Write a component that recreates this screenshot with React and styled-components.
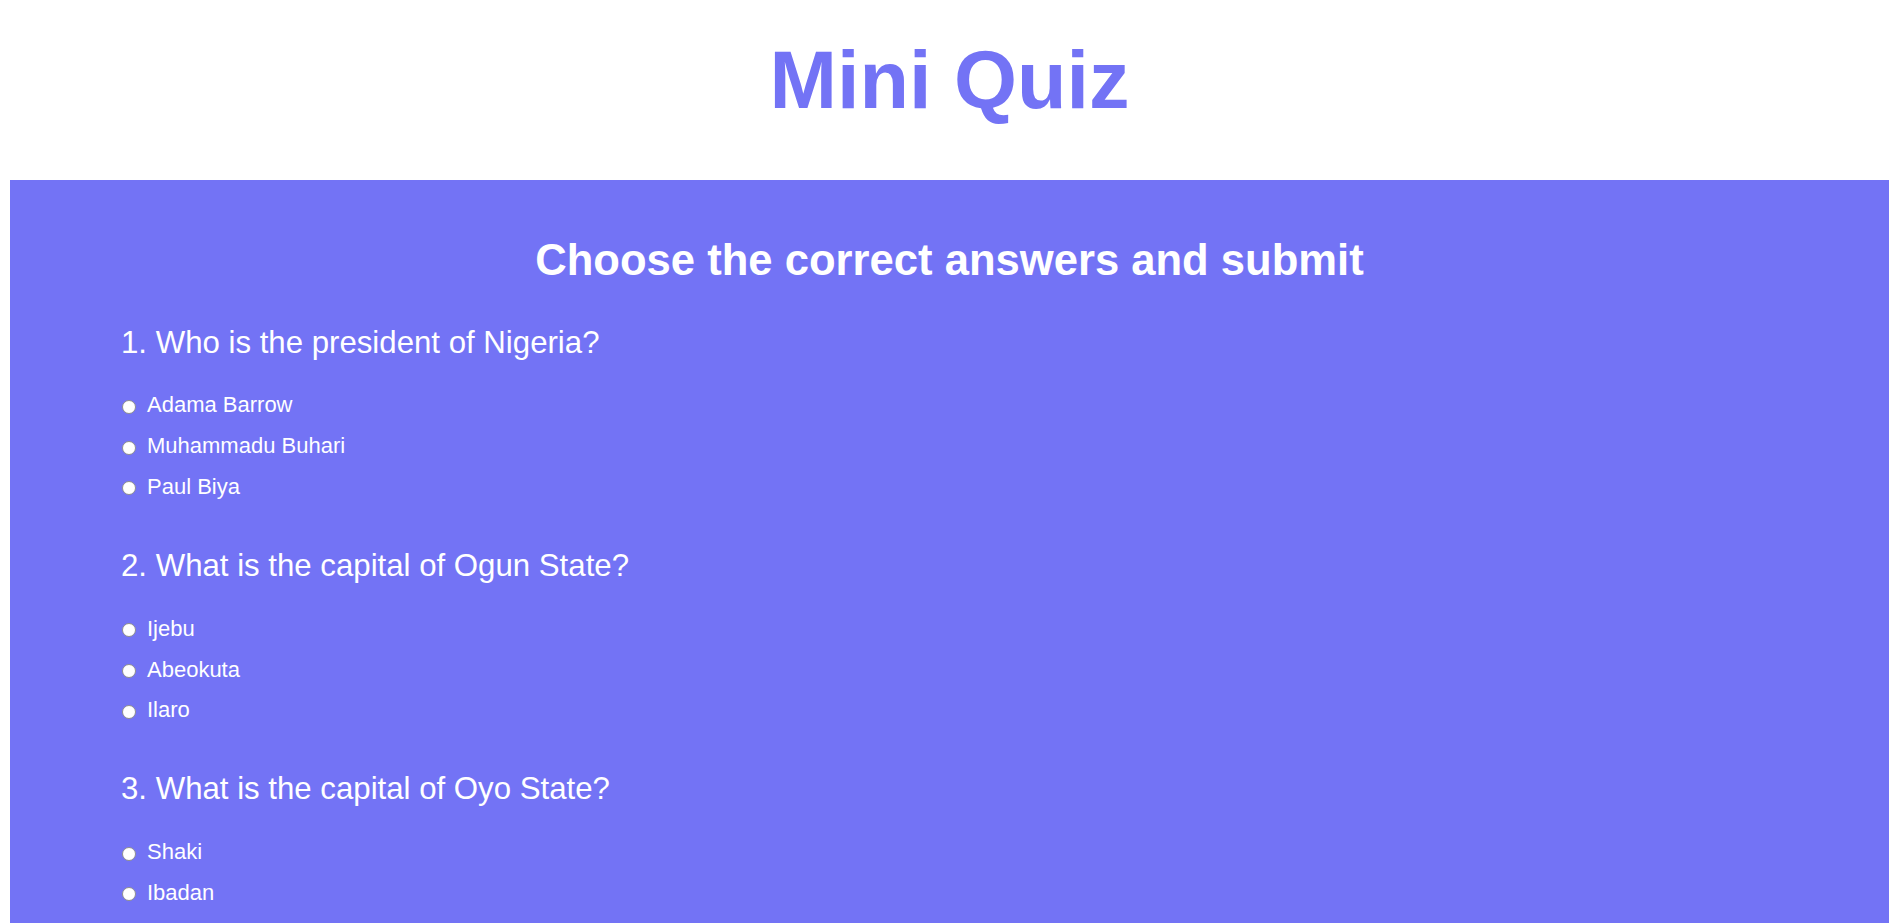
import React from "react";
import styled, { createGlobalStyle } from "styled-components";

const GlobalStyle = createGlobalStyle`
  html, body {
    margin: 0;
    padding: 0;
    background: #ffffff;
    font-family: "Liberation Sans", Arial, sans-serif;
  }
`;

const Page = styled.div`
  padding: 0 9px 40px 10px;
`;

const Title = styled.h1`
  margin: 34px 0 54px;
  font-size: 81px;
  line-height: 92px;
  font-weight: 700;
  text-align: center;
  color: #7373f5;
`;

const Panel = styled.form`
  background: #7373f5;
  color: #ffffff;
  padding: 55px 111px 60px;
`;

const Heading = styled.h2`
  margin: 0 0 39.5px;
  font-size: 43.6px;
  line-height: 50px;
  font-weight: 700;
  text-align: center;
`;

const QuestionBlock = styled.fieldset`
  border: 0;
  margin: 0 0 40.5px;
  padding: 0;
  min-width: 0;
`;

const QuestionText = styled.legend`
  padding: 0;
  margin: 0 0 24.5px;
  font-size: 31.2px;
  line-height: 36px;
  font-weight: 400;
`;

const OptionList = styled.div`
  display: flex;
  flex-direction: column;
`;

const Option = styled.label`
  display: flex;
  align-items: center;
  gap: 11px;
  height: 40.8px;
  font-size: 22px;
  cursor: pointer;
`;

const Radio = styled.input.attrs({ type: "radio" })`
  appearance: none;
  -webkit-appearance: none;
  box-sizing: border-box;
  width: 14px;
  height: 14px;
  margin: 3px 0 0 1px;
  flex: none;
  border: 1.5px solid #8e8e8e;
  border-radius: 50%;
  background: #ffffff;
  cursor: pointer;

  &:checked {
    background: radial-gradient(circle, #1a73e8 0 3px, #ffffff 3.5px);
    border-color: #1a73e8;
  }
`;

const SubmitButton = styled.button`
  font-family: "Liberation Sans", Arial, sans-serif;
  font-size: 22px;
  padding: 10px 30px;
  border: 2px solid #ffffff;
  background: #ffffff;
  color: #7373f5;
  font-weight: 700;
  border-radius: 4px;
  cursor: pointer;
`;

const questions = [
  {
    q: "Who is the president of Nigeria?",
    options: ["Adama Barrow", "Muhammadu Buhari", "Paul Biya"],
  },
  {
    q: "What is the capital of Ogun State?",
    options: ["Ijebu", "Abeokuta", "Ilaro"],
  },
  {
    q: "What is the capital of Oyo State?",
    options: ["Shaki", "Ibadan", "Ido"],
  },
];

export default function App() {
  return (
    <>
      <GlobalStyle />
      <Page>
        <Title>Mini Quiz</Title>
        <Panel onSubmit={(e) => e.preventDefault()}>
          <Heading>Choose the correct answers and submit</Heading>
          {questions.map((item, i) => (
            <QuestionBlock key={i}>
              <QuestionText>
                {i + 1}. {item.q}
              </QuestionText>
              <OptionList>
                {item.options.map((opt) => (
                  <Option key={opt}>
                    <Radio name={`q${i}`} value={opt} />
                    {opt}
                  </Option>
                ))}
              </OptionList>
            </QuestionBlock>
          ))}
          <SubmitButton type="submit">Submit</SubmitButton>
        </Panel>
      </Page>
    </>
  );
}
